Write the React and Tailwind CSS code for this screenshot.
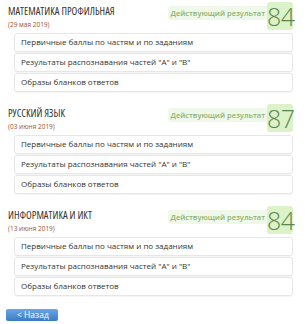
import React from "react";

const exams = [
  { title: "МАТЕМАТИКА ПРОФИЛЬНАЯ", date: "(29 мая 2019)", score: 84 },
  { title: "РУССКИЙ ЯЗЫК", date: "(03 июня 2019)", score: 87 },
  { title: "ИНФОРМАТИКА И ИКТ", date: "(13 июня 2019)", score: 84 },
];

const links = [
  "Первичные баллы по частям и по заданиям",
  'Результаты распознавания частей "А" и "В"',
  "Образы бланков ответов",
];

const Exam = ({ title, date, score }) => (
  <div>
    {/* Header */}
    <div className="flex justify-between h-[33px]">
      <div className="pt-[5px]">
        <div className="text-[10.5px] leading-[13px] text-[#333] whitespace-nowrap font-stretch-[82%]">{title}</div>
        <div className="text-[6.5px] leading-[9px] text-[#a0522d] mt-[2px] whitespace-nowrap">{date}</div>
      </div>
      <div className="flex items-start pt-[2px]">
        <div className="mt-[4px] h-[14px] px-[2px] bg-[#f0f9e9] rounded-l-[3px] text-[7.5px] leading-[14px] font-semibold text-[#8db36f] whitespace-nowrap">
          Действующий результат
        </div>
        <div className="w-[26px] h-[28px] bg-[#dcf2c8] rounded-[3px] text-[25px] leading-[28px] font-light text-[#5b8750] text-center tracking-[-0.5px]">
          {score}
        </div>
      </div>
    </div>

    {/* Links */}
    <div className="ml-[6px] flex flex-col gap-[1px]">
      {links.map((l) => (
        <div
          key={l}
          className="h-[19px] border border-[#e6e6e6] rounded-[3px] shadow-[0_1px_1px_rgba(0,0,0,0.04)] px-[6px] text-[8px] leading-[16px] text-[#333] whitespace-nowrap"
        >
          {l}
        </div>
      ))}
    </div>
  </div>
);

export default function App() {
  return (
    <div
      className="w-[308px] h-[324px] bg-white pl-[8px] pr-[15px] overflow-hidden"
      style={{ fontFamily: '"Open Sans", sans-serif' }}
    >
      <div className="flex flex-col gap-[10px]">
        {exams.map((e) => (
          <Exam key={e.title} {...e} />
        ))}
      </div>
      <button className="block mt-[13px] -ml-[2px] w-[52px] h-[12px] rounded-[2px] bg-gradient-to-b from-[#6aa6e6] to-[#3b7bc6] text-white text-[8.5px] leading-[12px] text-left pl-[11px]">
        &lt; Назад
      </button>
    </div>
  );
}
